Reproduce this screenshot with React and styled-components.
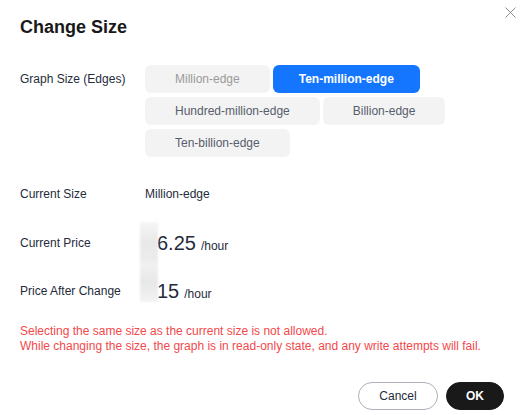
import React from "react";
import styled, { createGlobalStyle } from "styled-components";

const Global = createGlobalStyle`
  html, body { margin: 0; padding: 0; background: #fff; }
  body { font-family: "Liberation Sans", Arial, sans-serif; color: #252b3a; }
  * { box-sizing: border-box; }
`;

const Dialog = styled.div`
  position: relative;
  width: 524px;
  height: 415px;
  padding: 15px 20px 0 20px;
  display: flex;
  flex-direction: column;
`;

const Title = styled.h2`
  margin: 0;
  font-size: 18px;
  line-height: 24px;
  font-weight: 700;
  color: #191919;
`;

const Close = styled.button`
  position: absolute;
  top: 6px;
  right: 8px;
  width: 12px;
  height: 12px;
  padding: 0;
  border: none;
  background: none;
  display: flex;
  align-items: center;
  justify-content: center;
`;

const Form = styled.div`
  margin-top: 26px;
  display: flex;
  flex-direction: column;
`;

const Row = styled.div`
  display: grid;
  grid-template-columns: 125px 1fr;
  align-items: ${(p) => (p.$top ? "start" : "center")};
  margin-top: ${(p) => p.$mt || 0}px;
`;

const Label = styled.div`
  font-size: 12px;
  line-height: 28px;
  color: #252b3a;
`;

const Options = styled.div`
  display: flex;
  flex-wrap: wrap;
  gap: 4px 3px;
  max-width: 302px;
`;

const Option = styled.button`
  height: 28px;
  padding: 0 ${(p) => (p.$active ? 26 : 30)}px;
  border: none;
  border-radius: 6px;
  font-family: inherit;
  font-size: 12px;
  background: ${(p) => (p.$active ? "#1476ff" : "#f3f3f3")};
  color: ${(p) => (p.$active ? "#fff" : p.$disabled ? "#9a9a9a" : "#575d6c")};
  font-weight: ${(p) => (p.$active ? 700 : 400)};
`;

const Value = styled.div`
  font-size: 12px;
  line-height: 28px;
  color: #252b3a;
`;

const PriceGroup = styled.div`
  position: relative;
  display: flex;
  flex-direction: column;
  margin-top: 21px;
`;

const Redacted = styled.div`
  position: absolute;
  left: 120px;
  top: -7px;
  width: 18px;
  height: 80px;
  background: linear-gradient(
    180deg,
    #f6f6f6 0%,
    #e9e9e9 25%,
    #ececec 48%,
    #f1f1f1 52%,
    #e8e8e8 75%,
    #f3f3f3 100%
  );
  filter: blur(1px);
`;

const Price = styled.div`
  display: flex;
  align-items: baseline;
  height: 28px;
  padding-left: 12px;
  line-height: 28px;
`;

const Amount = styled.span`
  font-size: 20px;
  color: #252b3a;
`;

const Unit = styled.span`
  font-size: 12px;
  margin-left: 5px;
  color: #252b3a;
`;

const Notice = styled.div`
  margin-top: 19px;
  font-size: 12px;
  line-height: 15px;
  color: #f3484b;
`;

const Footer = styled.div`
  margin-top: 28px;
  display: flex;
  justify-content: flex-end;
  gap: 8px;
`;

const Btn = styled.button`
  height: 28px;
  border-radius: 14px;
  font-family: inherit;
  font-size: 12px;
  width: ${(p) => p.$w}px;
  border: 1px solid ${(p) => (p.$primary ? "#191919" : "#adb0b8")};
  background: ${(p) => (p.$primary ? "#191919" : "#fff")};
  color: ${(p) => (p.$primary ? "#fff" : "#252b3a")};
  font-weight: ${(p) => (p.$primary ? 700 : 400)};
`;

const sizes = [
  { name: "Million-edge", disabled: true },
  { name: "Ten-million-edge", active: true },
  { name: "Hundred-million-edge" },
  { name: "Billion-edge" },
  { name: "Ten-billion-edge" },
];

export default function App() {
  return (
    <>
      <Global />
      <Dialog>
        <Close aria-label="close">
          <svg width="11" height="11" viewBox="0 0 11 11">
            <path d="M0.5 0.5 L10.5 10.5 M10.5 0.5 L0.5 10.5" stroke="#8a8e99" strokeWidth="1" fill="none" />
          </svg>
        </Close>
        <Title>Change Size</Title>
        <Form>
          <Row $top>
            <Label>Graph Size (Edges)</Label>
            <Options>
              {sizes.map((s) => (
                <Option key={s.name} $active={s.active} $disabled={s.disabled}>
                  {s.name}
                </Option>
              ))}
            </Options>
          </Row>
          <Row $mt={23}>
            <Label>Current Size</Label>
            <Value>Million-edge</Value>
          </Row>
          <PriceGroup>
            <Redacted />
            <Row>
              <Label>Current Price</Label>
              <Price>
                <Amount>6.25</Amount>
                <Unit>/hour</Unit>
              </Price>
            </Row>
            <Row $mt={20}>
              <Label>Price After Change</Label>
              <Price>
                <Amount>15</Amount>
                <Unit>/hour</Unit>
              </Price>
            </Row>
          </PriceGroup>
        </Form>
        <Notice>
          Selecting the same size as the current size is not allowed.
          <br />
          While changing the size, the graph is in read-only state, and any write attempts will fail.
        </Notice>
        <Footer>
          <Btn $w={80}>Cancel</Btn>
          <Btn $w={58} $primary>OK</Btn>
        </Footer>
      </Dialog>
    </>
  );
}
